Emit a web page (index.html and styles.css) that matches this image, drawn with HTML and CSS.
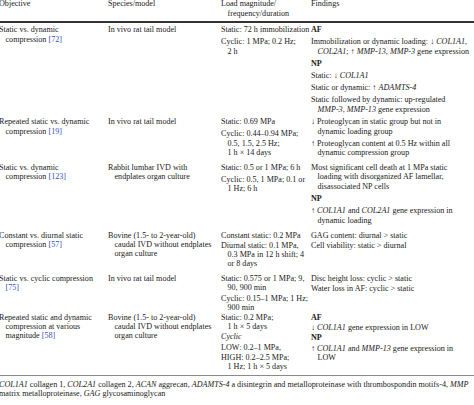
FILE: index.html
```html
<!DOCTYPE html>
<html>
<head>
<meta charset="utf-8">
<link rel="stylesheet" href="styles.css">
</head>
<body>
<div class="page">
<table class="tbl">
<colgroup>
<col class="c1"><col class="c2"><col class="c3"><col class="c4">
</colgroup>
<thead>
<tr>
<th><p>Objective</p></th>
<th><p>Species/model</p></th>
<th><p>Load magnitude/<br>frequency/duration</p></th>
<th><p>Findings</p></th>
</tr>
</thead>
<tbody>
<tr class="r1">
<td><p>Static vs. dynamic<br>compression <a class="ref">[72]</a></p></td>
<td><p>In vivo rat tail model</p></td>
<td><p>Static: 72 h immobilization</p><p>Cyclic: 1 MPa; 0.2 Hz;<br>2 h</p></td>
<td><p class="b">AF</p><p>Immobilization or dynamic loading: ↓ <i>COL1A1</i>,<br><i>COL2A1</i>; ↑ <i>MMP-13</i>, <i>MMP-3</i> gene expression</p><p class="b">NP</p><p>Static: ↓ <i>COL1A1</i></p><p>Static or dynamic: ↑ <i>ADAMTS-4</i></p><p>Static followed by dynamic: up-regulated<br><i>MMP-3</i>, <i>MMP-13</i> gene expression</p></td>
</tr>
<tr class="r2">
<td><p>Repeated static vs. dynamic<br>compression <a class="ref">[19]</a></p></td>
<td><p>In vivo rat tail model</p></td>
<td><p>Static: 0.69 MPa</p><p>Cyclic: 0.44–0.94 MPa;<br>0.5, 1.5, 2.5 Hz;<br>1 h × 14 days</p></td>
<td><p>↓ Proteoglycan in static group but not in<br>dynamic loading group</p><p>↑ Proteoglycan content at 0.5 Hz within all<br>dynamic compression group</p></td>
</tr>
<tr class="r3">
<td><p>Static vs. dynamic<br>compression <a class="ref">[123]</a></p></td>
<td><p>Rabbit lumbar IVD with<br>endplates organ culture</p></td>
<td><p>Static: 0.5 or 1 MPa; 6 h</p><p>Cyclic: 0.5, 1 MPa; 0.1 or<br>1 Hz; 6 h</p></td>
<td><p>Most significant cell death at 1 MPa static<br>loading with disorganized AF lamellar,<br>disassociated NP cells</p><p class="b">NP</p><p>↑ <i>COL1A1</i> and <i>COL2A1</i> gene expression in<br>dynamic loading</p></td>
</tr>
<tr class="r4 tight">
<td><p>Constant vs. diurnal static<br>compression <a class="ref">[57]</a></p></td>
<td><p>Bovine (1.5- to 2-year-old)<br>caudal IVD without endplates<br>organ culture</p></td>
<td><p>Constant static: 0.2 MPa</p><p>Diurnal static: 0.1 MPa,<br>0.3 MPa in 12 h shift; 4<br>or 8 days</p></td>
<td><p>GAG content: diurnal &gt; static</p><p>Cell viability: static &gt; diurnal</p></td>
</tr>
<tr class="r5 tight">
<td><p>Static vs. cyclic compression<br><a class="ref">[75]</a></p></td>
<td><p>In vivo rat tail model</p></td>
<td><p>Static: 0.575 or 1 MPa; 9,<br>90, 900 min</p><p>Cyclic: 0.15–1 MPa; 1 Hz;<br>900 min</p></td>
<td><p>Disc height loss: cyclic &gt; static</p><p>Water loss in AF: cyclic &gt; static</p></td>
</tr>
<tr class="r6 tight">
<td><p>Repeated static and dynamic<br>compression at various<br>magnitude <a class="ref">[58]</a></p></td>
<td><p>Bovine (1.5- to 2-year-old)<br>caudal IVD without endplates<br>organ culture</p></td>
<td><p>Static: 0.2 MPa;<br>1 h × 5 days</p><p><i>Cyclic</i></p><p>LOW: 0.2–1 MPa,</p><p>HIGH: 0.2–2.5 MPa;<br>1 Hz; 1 h × 5 days</p></td>
<td><p class="b">AF</p><p>↓ <i>COL1A1</i> gene expression in LOW</p><p class="b">NP</p><p>↑ <i>COL1A1</i> and <i>MMP-13</i> gene expression in<br>LOW</p></td>
</tr>
</tbody>
</table>
<p class="foot"><i>COL1A1</i> collagen 1, <i>COL2A1</i> collagen 2, <i>ACAN</i> aggrecan, <i>ADAMTS-4</i> a disintegrin and metalloproteinase with thrombospondin motifs-4, <i>MMP</i><br>matrix metalloproteinase, <i>GAG</i> glycosaminoglycan</p>
</div>
</body>
</html>
```
FILE: styles.css
```css
html, body {
  margin: 0;
  padding: 0;
  background: #fff;
}
body {
  width: 474px;
  height: 405px;
  overflow: hidden;
}
.page {
  width: 540px;
  margin-left: -1px;
  margin-top: -1px;
  font-family: "Liberation Serif", "DejaVu Serif", serif;
  font-size: 8.1px;
  line-height: 9.5px;
  color: #202020;
}
.tbl {
  border-collapse: collapse;
  table-layout: fixed;
  width: 520px;
}
.c1 { width: 109px; }
.c2 { width: 113px; }
.c3 { width: 90px; }
.c4 { width: 208px; }
th {
  font-weight: normal;
  text-align: left;
  vertical-align: top;
  padding: 0 0 2.75px 0;
  border-bottom: 2px solid #333;
}
td {
  vertical-align: top;
  padding: 3px 0 0 0;
}
td p, th p {
  margin: 0;
  white-space: nowrap;
  padding-left: 6.5px;
  text-indent: -6.5px;
}
td p + p {
  margin-top: 2.6px;
}
.tight td {
  line-height: 9.3px;
}
.tight td p + p {
  margin-top: 1px;
}
.r1 td { padding-top: 2.5px; }
.r2 td { padding-top: 3px; }
.r3 td { padding-top: 5px; }
.r4 td { padding-top: 5.5px; }
.r5 td { padding-top: 5.5px; }
.r6 td {
  padding-top: 0.5px;
  padding-bottom: 3.5px;
  border-bottom: 1.5px solid #8a8a8a;
}
.b {
  font-weight: bold;
}
.ref {
  color: #3b4db8;
}
.foot {
  margin: 3.5px 0 0 0;
  line-height: 9.7px;
  white-space: nowrap;
}
```
